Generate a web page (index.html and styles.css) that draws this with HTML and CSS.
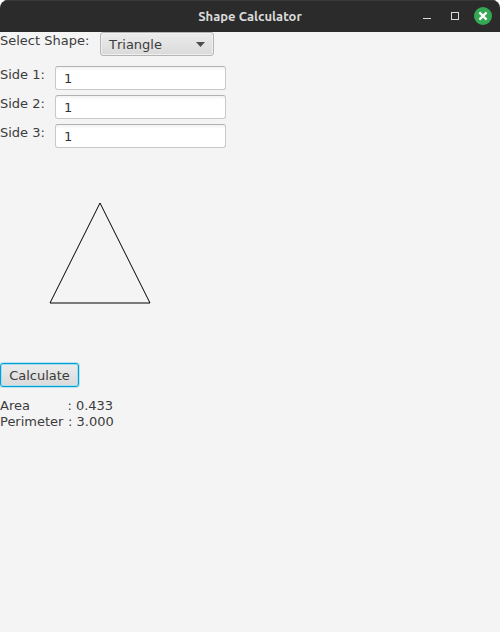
FILE: index.html
```html
<!DOCTYPE html>
<html lang="en">
<head>
<meta charset="utf-8">
<title>Shape Calculator</title>
<link rel="stylesheet" href="styles.css">
</head>
<body>
<div class="window">
  <header class="titlebar">
    <h1 class="title">Shape Calculator</h1>
    <svg class="controls" width="84" height="32" viewBox="0 0 84 32">
      <path d="M7 18.5h8" fill="none" stroke="#dadada"/>
      <rect x="35.5" y="12.5" width="7" height="7" fill="none" stroke="#dadada"/>
      <circle cx="67" cy="16" r="9" fill="#35a854"/>
      <path d="M63.4 12.4l7.2 7.2M70.6 12.4l-7.2 7.2" fill="none" stroke="#fff" stroke-width="2.2"/>
    </svg>
  </header>
  <main class="content">
    <div class="shape-row">
      <span class="label">Select Shape:</span>
      <div class="combo"><span>Triangle</span><i class="arrow"></i></div>
    </div>
    <form class="sides">
      <label class="label" for="s1">Side 1:</label><input class="field" id="s1" value="1">
      <label class="label" for="s2">Side 2:</label><input class="field" id="s2" value="1">
      <label class="label" for="s3">Side 3:</label><input class="field" id="s3" value="1">
    </form>
    <svg class="drawing" width="200" height="200" viewBox="0 0 200 200">
      <path d="M100 50L50 150H150Z" fill="none" stroke="#000"/>
    </svg>
    <button class="calculate" type="button">Calculate</button>
    <div class="result"><span class="name">Area</span><span>: 0.433</span></div>
    <div class="result"><span class="name wide">Perimeter</span><span>: 3.000</span></div>
  </main>
</div>
</body>
</html>
```
FILE: styles.css
```css
* { box-sizing: border-box; }
body {
  margin: 0;
  background: #fff;
  color: #3c3c3c;
  font: 13px/16px "DejaVu Sans", sans-serif;
}
.window {
  height: 632px;
  overflow: hidden;
  border-radius: 8px 8px 0 0;
  background: #f4f4f4;
}
.titlebar {
  display: grid;
  grid-template-columns: 68px 1fr 84px;
  height: 32px;
  padding-left: 16px;
  background: #2b2b2b;
  box-shadow: inset 0 1px #383838;
}
.title {
  grid-column: 2;
  margin: 0;
  color: #dadada;
  font: 600 13px/33px Ubuntu, "Open Sans", "Noto Sans", sans-serif;
  text-align: center;
}
.controls { display: block; }
.label { white-space: pre; }
.shape-row {
  display: flex;
  gap: 10px;
  height: 24px;
}
.shape-row .label { width: 90px; padding-top: 1px; }
.combo {
  display: flex;
  align-items: center;
  justify-content: space-between;
  width: 114px;
  height: 24px;
  padding: 1px 8px 0;
  border: 1px solid #b5b5b5;
  border-radius: 3px;
  background: linear-gradient(#ececec, #dadada);
  box-shadow: inset 0 0 0 1px #f0f0f0;
  font-kerning: none;
}
.arrow {
  width: 9px;
  height: 5px;
  background: #4d4d4d;
  clip-path: polygon(0 0, 100% 0, 50% 100%);
}
.sides {
  display: grid;
  grid-template-columns: 45px 171px;
  gap: 5px 10px;
  margin-top: 10px;
}
.sides .label { padding-top: 1px; }
.field {
  width: 171px;
  height: 24px;
  padding: 1px 8px 0;
  border: 1px solid #c8c8c8;
  border-top-color: #b2b2b2;
  border-radius: 3px;
  background: linear-gradient(#f2f2f2, #fff 4px);
  color: #333;
  font: inherit;
}
.drawing { display: block; margin: 5px 0 10px; }
.calculate {
  display: block;
  width: 79px;
  height: 24px;
  margin: 0 0 11px;
  padding: 1px 0 0;
  border: 1px solid #039ed3;
  border-radius: 3px;
  background: linear-gradient(#ececec, #dadada);
  box-shadow: 0 0 0 1px #b8e3f1, inset 0 0 0 1px #a5dcee;
  color: #3c3c3c;
  font: inherit;
}
.result { display: flex; white-space: pre; }
.name { width: 67.4px; }
.wide { width: 68px; }
```
